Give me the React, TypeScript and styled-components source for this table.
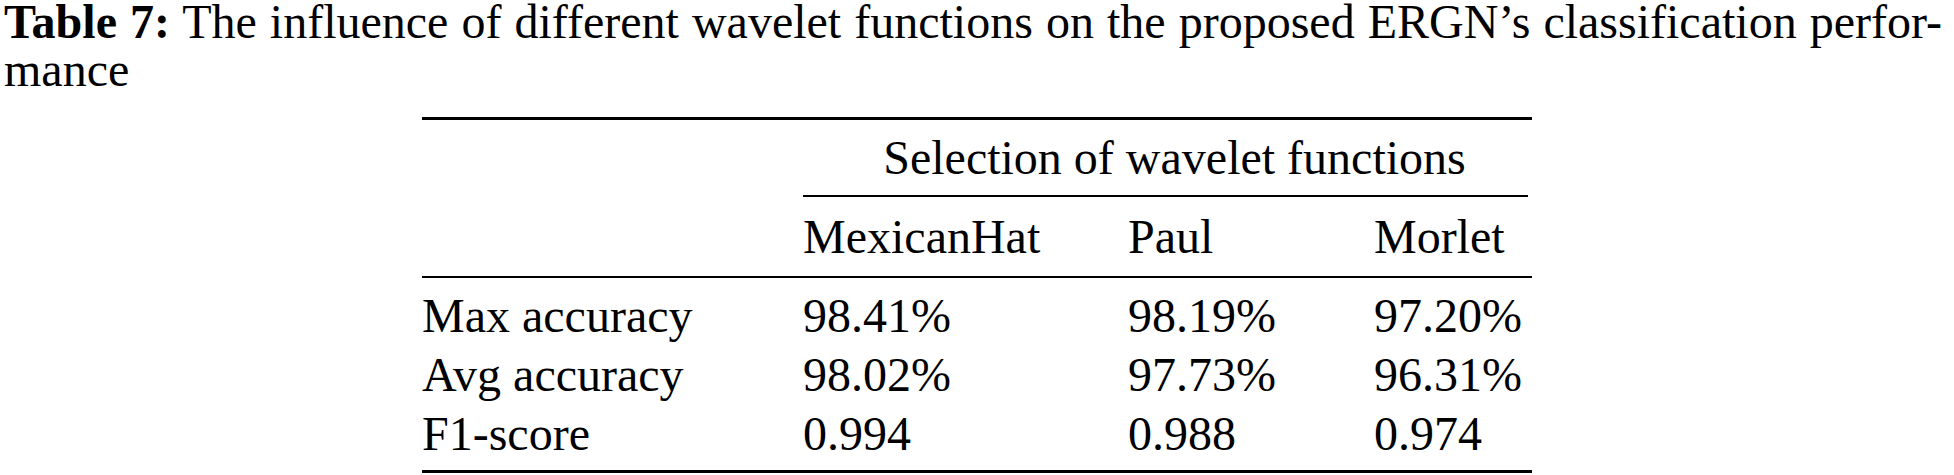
import React from "react";
import styled, { createGlobalStyle } from "styled-components";

const Global = createGlobalStyle`
  html, body {
    margin: 0;
    padding: 0;
    background: #ffffff;
  }
  body {
    font-family: "Liberation Serif", "Times New Roman", serif;
    color: #000000;
    width: 1954px;
  }
`;

const Page = styled.div`
  width: 1954px;
  height: 475px;
  overflow: hidden;
  display: flex;
  flex-direction: column;
`;

const Caption = styled.div`
  margin: -2px 0 0 4px;
  width: 1938px;
  font-size: 48px;
  line-height: 48px;
`;

const CaptionLine = styled.span<{ $justify?: boolean }>`
  display: block;
  white-space: nowrap;
  text-align: ${(p) => (p.$justify ? "justify" : "left")};
  text-align-last: ${(p) => (p.$justify ? "justify" : "left")};
`;

const Label = styled.b`
  font-weight: 700;
`;

const Table = styled.div`
  margin: 23px auto 0;
  width: 1110px;
  border-top: 3px solid #000;
  border-bottom: 3px solid #000;
  font-size: 48px;
  line-height: 59px;
`;

const Row = styled.div`
  display: grid;
  grid-template-columns: 381px 325px 246px 1fr;
  white-space: nowrap;
`;

const GroupRow = styled.div`
  display: grid;
  grid-template-columns: 381px 1fr;
  padding-top: 8px;
`;

const GroupCell = styled.div`
  margin-right: 4px;
  padding: 0 8px 8px 26px;
  text-align: center;
  border-bottom: 2px solid #000;
  white-space: nowrap;
`;

const HeadRow = styled(Row)`
  padding: 10px 0;
  border-bottom: 2px solid #000;
`;

const Body = styled.div`
  padding: 8px 0 7px;
`;

const Cell = styled.div``;

const columns = ["MexicanHat", "Paul", "Morlet"];

const rows = [
  { name: "Max accuracy", values: ["98.41%", "98.19%", "97.20%"] },
  { name: "Avg accuracy", values: ["98.02%", "97.73%", "96.31%"] },
  { name: "F1-score", values: ["0.994", "0.988", "0.974"] },
];

export default function App() {
  return (
    <Page>
      <Global />
      <Caption>
        <CaptionLine $justify>
          <Label>Table 7:</Label> The influence of different wavelet functions on the proposed ERGN’s classification perfor-
        </CaptionLine>
        <CaptionLine>mance</CaptionLine>
      </Caption>
      <Table>
        <GroupRow>
          <Cell />
          <GroupCell>Selection of wavelet functions</GroupCell>
        </GroupRow>
        <HeadRow>
          <Cell />
          {columns.map((c) => (
            <Cell key={c}>{c}</Cell>
          ))}
        </HeadRow>
        <Body>
          {rows.map((r) => (
            <Row key={r.name}>
              <Cell>{r.name}</Cell>
              {r.values.map((v, i) => (
                <Cell key={i}>{v}</Cell>
              ))}
            </Row>
          ))}
        </Body>
      </Table>
    </Page>
  );
}
